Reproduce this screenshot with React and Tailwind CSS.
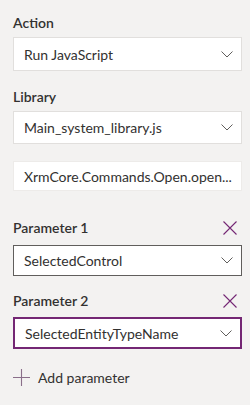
import { useState } from 'react';

const Chevron = () => (
  <svg width="12" height="7" viewBox="0 0 12 7" fill="none" className="shrink-0">
    <path d="M0.5 0.5 L6 6 L11.5 0.5" stroke="#605e5c" strokeWidth="1" />
  </svg>
);

const CloseIcon = () => (
  <svg width="14" height="14" viewBox="0 0 14 14" fill="none">
    <path d="M0.5 0.5 L13.5 13.5 M13.5 0.5 L0.5 13.5" stroke="#742774" strokeWidth="1.1" />
  </svg>
);

const PlusIcon = () => (
  <svg width="17" height="17" viewBox="0 0 17 17" fill="none">
    <path d="M8.5 0 V17 M0 8.5 H17" stroke="#8a6f8a" strokeWidth="1.1" />
  </svg>
);

const Select = ({ value, className }) => (
  <div
    className={`flex items-center justify-between bg-white pl-[10px] pr-[8px] ${className}`}
  >
    <span className="whitespace-nowrap">{value}</span>
    <Chevron />
  </div>
);

const Label = ({ children, className = '' }) => (
  <div className={`h-5 text-[14px] font-semibold leading-5 ${className}`}>{children}</div>
);

export default function App() {
  const [params] = useState(['SelectedControl', 'SelectedEntityTypeName']);

  return (
    <div
      className="h-[405px] w-[250px] bg-[#f3f2f1] pl-[13px] pr-[8px] pt-[13px] text-[14px] text-[#323130]"
      style={{ fontFamily: 'Lato, "Open Sans", sans-serif' }}
    >
      <Label>Action</Label>
      <Select
        value="Run JavaScript"
        className="mt-[4px] h-[34px] border border-[#e1dfdd]"
      />

      <Label className="mt-[16px]">Library</Label>
      <Select
        value="Main_system_library.js"
        className="mt-[4px] h-[33px] border border-[#e1dfdd]"
      />

      <div className="mt-[17px] flex h-[30px] items-center border border-[#edebe9] bg-white pl-[10px] pr-[6px]">
        <span className="whitespace-nowrap">XrmCore.Commands.Open.open...</span>
      </div>

      <div className="mt-[27px] flex h-5 items-center justify-between pr-[5px]">
        <Label>Parameter 1</Label>
        <CloseIcon />
      </div>
      <Select
        value={params[0]}
        className="mt-[7px] h-[31px] border border-[#605e5c]"
      />

      <div className="mt-[15px] flex h-5 items-center justify-between pr-[5px]">
        <Label>Parameter 2</Label>
        <CloseIcon />
      </div>
      <Select
        value={params[1]}
        className="mt-[6px] h-[32px] border-2 border-[#742774] pl-[9px] pr-[7px]"
      />

      <div className="mt-[18px] flex h-5 items-center gap-[8px]">
        <PlusIcon />
        <span>Add parameter</span>
      </div>
    </div>
  );
}
